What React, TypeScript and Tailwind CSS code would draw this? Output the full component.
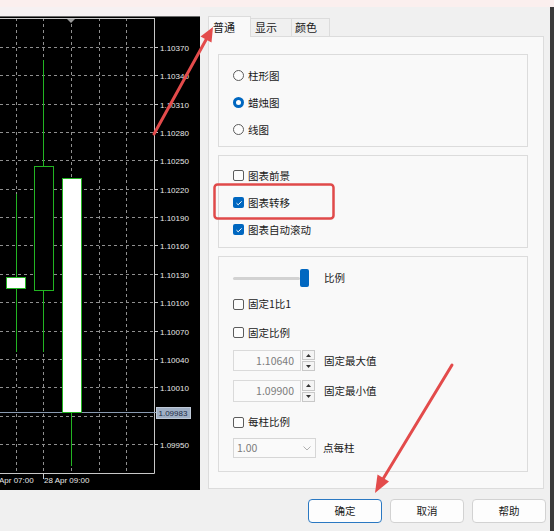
import React from 'react';

const FONT = { fontFamily: '"Noto Sans CJK SC", "Noto Sans", sans-serif' };

function Chart() {
  const labels = ['1.10370','1.10340','1.10310','1.10280','1.10250','1.10220','1.10190','1.10160','1.10130','1.10100','1.10070','1.10040','1.10010','','1.09950'];
  const ys = labels.map((_, i) => Math.round(47 + i * 28.35) + 0.5);
  const vx = [16.5, 43.5, 71.5, 99.5, 126.5];
  const green = '#22b422';
  return (
    <svg width="200" height="474" viewBox="0 0 200 474" className="block">
      <g transform="translate(0,-16)">
        <rect x="0" y="16" width="200" height="474" fill="#000" />
        <line x1="0" y1="16.5" x2="200" y2="16.5" stroke="#6b6b6b" />
        {ys.map((y, i) => (
          <line key={'h' + i} x1="0" y1={y} x2="154" y2={y} stroke="#8f8f8f" strokeDasharray="3 3" />
        ))}
        {vx.map((x, i) => (
          <line key={'v' + i} x1={x} y1="18" x2={x} y2="473" stroke="#8f8f8f" strokeDasharray="3 3" />
        ))}
        <line x1="0" y1="18.5" x2="154.5" y2="18.5" stroke="#c8c8c8" />
        <line x1="154.5" y1="18" x2="154.5" y2="473.5" stroke="#c8c8c8" />
        <line x1="0" y1="473.5" x2="154.5" y2="473.5" stroke="#c8c8c8" />
        <polygon points="67,19 75,19 71,23" fill="#9a9a9a" />
        {labels.map((l, i) =>
          l ? (
            <g key={'l' + i}>
              <line x1="154" y1={ys[i]} x2="158" y2={ys[i]} stroke="#c8c8c8" />
              <text x="160" y={ys[i] + 3} fontSize="8" fill="#e8e8e8" fontFamily="Liberation Sans, Arial, sans-serif">{l}</text>
            </g>
          ) : null
        )}
        {/* current price line */}
        <line x1="0" y1="412.5" x2="156" y2="412.5" stroke="#8a9bb2" />
        <rect x="156.5" y="407.5" width="34" height="11" fill="#9fafc4" stroke="#c0cad8" />
        <text x="158.5" y="416" fontSize="8" fill="#1c2a44" fontFamily="Liberation Sans, Arial, sans-serif">1.09983</text>
        {/* time axis */}
        <line x1="43.5" y1="473" x2="43.5" y2="479" stroke="#c8c8c8" />
        <text x="-1" y="483" fontSize="8" fill="#e8e8e8" fontFamily="Liberation Sans, Arial, sans-serif">Apr 07:00</text>
        <text x="44" y="483" fontSize="8" fill="#e8e8e8" fontFamily="Liberation Sans, Arial, sans-serif">28 Apr 09:00</text>
        {/* candle 1 */}
        <line x1="16.5" y1="194" x2="16.5" y2="352" stroke={green} />
        <rect x="6.5" y="277.5" width="19" height="11" fill="#fff" stroke={green} />
        {/* candle 2 */}
        <line x1="43.5" y1="60" x2="43.5" y2="352" stroke={green} />
        <rect x="34.5" y="166.5" width="19" height="124" fill="#000" stroke={green} />
        {/* candle 3 */}
        <line x1="71.5" y1="412" x2="71.5" y2="466" stroke={green} />
        <rect x="62.5" y="178.5" width="19" height="234" fill="#fff" stroke={green} />
      </g>
    </svg>
  );
}

function CheckBox({ checked }: { checked?: boolean }) {
  return checked ? (
    <span className="w-[11px] h-[11px] rounded-[2px] bg-[#0067c0] flex items-center justify-center shrink-0">
      <svg width="8" height="8" viewBox="0 0 8 8"><path d="M1.5 4.2 L3.2 5.8 L6.6 2.3" stroke="#fff" strokeWidth="1" fill="none" /></svg>
    </span>
  ) : (
    <span className="w-[11px] h-[11px] rounded-[2px] border border-[#5c5c5c] bg-[#fdfdfd] shrink-0" />
  );
}

function Radio({ checked }: { checked?: boolean }) {
  return checked ? (
    <span className="w-[11px] h-[11px] rounded-full bg-[#0067c0] flex items-center justify-center shrink-0">
      <span className="w-[5px] h-[5px] rounded-full bg-white" />
    </span>
  ) : (
    <span className="w-[11px] h-[11px] rounded-full border border-[#5c5c5c] bg-[#fdfdfd] shrink-0" />
  );
}

function Row({ h, children, className = '' }: { h: string; children: React.ReactNode; className?: string }) {
  return <div className={`flex items-center gap-[4px] ${h} ${className}`}>{children}</div>;
}

function Spin({ value, label, h }: { value: string; label: string; h: string }) {
  return (
    <div className={`flex items-center ${h}`}>
      <div className="w-[68px] h-full border border-[#dadada] bg-[#fafafa] flex items-center justify-end pr-[6px] text-[#7c7c7c] text-[10.5px]" style={FONT}>{value}</div>
      <div className="ml-[1px] w-[13px] h-full flex flex-col gap-[1px]">
        <div className="flex-1 border border-[#c8c8c8] bg-[#f4f4f4] flex items-center justify-center">
          <svg width="5" height="3" viewBox="0 0 5 3"><polygon points="0,3 5,3 2.5,0" fill="#333" /></svg>
        </div>
        <div className="flex-1 border border-[#c8c8c8] bg-[#f4f4f4] flex items-center justify-center">
          <svg width="5" height="3" viewBox="0 0 5 3"><polygon points="0,0 5,0 2.5,3" fill="#333" /></svg>
        </div>
      </div>
      <span className="ml-[9px] text-[10.5px] text-[#1a1a1a]">{label}</span>
    </div>
  );
}

export default function App() {
  return (
    <div className="w-[554px] h-[531px] bg-[#f0f0f0] flex flex-col overflow-hidden relative text-[10.5px] text-[#1a1a1a]" style={FONT}>
      <div className="h-[7px] bg-[#fbefee] shrink-0" />
      <div className="flex flex-1">
        <div className="w-[200px] flex flex-col shrink-0">
          <div className="h-[9px] bg-[#f6f1f2]" />
          <Chart />
        </div>
        <div className="w-[350px] flex flex-col pl-[8px] pr-[6px] shrink-0">
          <div className="h-[29px] flex items-end">
            <div className="h-[21px] w-[43px] bg-[#f9f9f9] border border-b-0 border-[#dcdcdc] relative z-10 -mb-px flex items-center pl-[4px] text-[11px]">普通</div>
            <div className="h-[18px] w-[41px] bg-[#f0f0f0] border border-b-0 border-l-0 border-[#dcdcdc] flex items-center pl-[4px] text-[11px]">显示</div>
            <div className="h-[18px] w-[38px] bg-[#f0f0f0] border border-b-0 border-l-0 border-[#dcdcdc] flex items-center pl-[3px] text-[11px]">颜色</div>
          </div>
          <div className="h-[453px] border border-[#dcdcdc] bg-[#f9f9f9] pt-[17px] pl-[9px] pr-[15px] flex flex-col gap-[8px]">
            <div className="h-[93px] border border-[#dcdcdc] pt-[7px] pl-[14px] flex flex-col">
              <Row h="h-[27px]"><Radio /><span>柱形图</span></Row>
              <Row h="h-[27px]"><Radio checked /><span>蜡烛图</span></Row>
              <Row h="h-[27px]"><Radio /><span>线图</span></Row>
            </div>
            <div className="h-[93px] border border-[#dcdcdc] pt-[6px] pl-[14px] flex flex-col">
              <Row h="h-[27px]"><CheckBox /><span>图表前景</span></Row>
              <Row h="h-[27px]"><CheckBox checked /><span>图表转移</span></Row>
              <Row h="h-[27px]"><CheckBox checked /><span>图表自动滚动</span></Row>
            </div>
            <div className="h-[216px] border border-[#dcdcdc] pt-[9px] pl-[14px] flex flex-col">
              <div className="h-[24px] flex items-center">
                <div className="w-[67px] h-[3px] bg-[#d2d2d2] rounded-full" />
                <div className="w-[9px] h-[18px] bg-[#0067c0] rounded-[2px]" />
                <span className="ml-[15px]">比例</span>
              </div>
              <Row h="h-[28px]"><CheckBox /><span>固定1比1</span></Row>
              <Row h="h-[29px]"><CheckBox /><span>固定比例</span></Row>
              <div className="mt-[3px]"><Spin value="1.10640" label="固定最大值" h="h-[21px]" /></div>
              <div className="mt-[9px]"><Spin value="1.09900" label="固定最小值" h="h-[22px]" /></div>
              <Row h="h-[20px]" className="mt-[10px]"><CheckBox /><span>每柱比例</span></Row>
              <div className="mt-[6px] h-[20px] flex items-center">
                <div className="w-[83px] h-full border border-[#d6d6d6] bg-[#fafafa] flex items-center pl-[3px] pr-[4px] text-[#7c7c7c]">
                  <span className="flex-1">1.00</span>
                  <svg width="8" height="5" viewBox="0 0 8 5"><path d="M0.5 0.5 L4 4 L7.5 0.5" stroke="#b0b0b0" fill="none" /></svg>
                </div>
                <span className="ml-[7px]">点每柱</span>
              </div>
            </div>
          </div>
          <div className="mt-[10px] ml-[100px] flex gap-[8px]">
            <div className="w-[74px] h-[24px] shrink-0 bg-[#fdfdfd] border border-[#2a78c2] rounded-[4px] flex items-center justify-center">确定</div>
            <div className="w-[74px] h-[24px] shrink-0 bg-[#fdfdfd] border border-[#d2d2d2] rounded-[4px] flex items-center justify-center">取消</div>
            <div className="w-[74px] h-[24px] shrink-0 bg-[#fdfdfd] border border-[#d2d2d2] rounded-[4px] flex items-center justify-center">帮助</div>
          </div>
        </div>
        <div className="w-[4px] bg-[#3b3b3b] shrink-0" />
      </div>
      <svg className="absolute inset-0 pointer-events-none z-20" width="554" height="531" viewBox="0 0 554 531">
        <line x1="154" y1="134" x2="207" y2="38" stroke="#e34b4b" strokeWidth="3" strokeLinecap="round" />
        <polygon points="213,27 211.5,42.5 200.5,36.5" fill="#e34b4b" />
        <line x1="452" y1="365" x2="383" y2="479" stroke="#e34b4b" strokeWidth="3" strokeLinecap="round" />
        <polygon points="375,493 389,481.5 377.5,474.5" fill="#e34b4b" />
        <rect x="214.5" y="184.5" width="119" height="34" rx="3" fill="none" stroke="#e04a4a" strokeWidth="2.5" />
      </svg>
    </div>
  );
}
